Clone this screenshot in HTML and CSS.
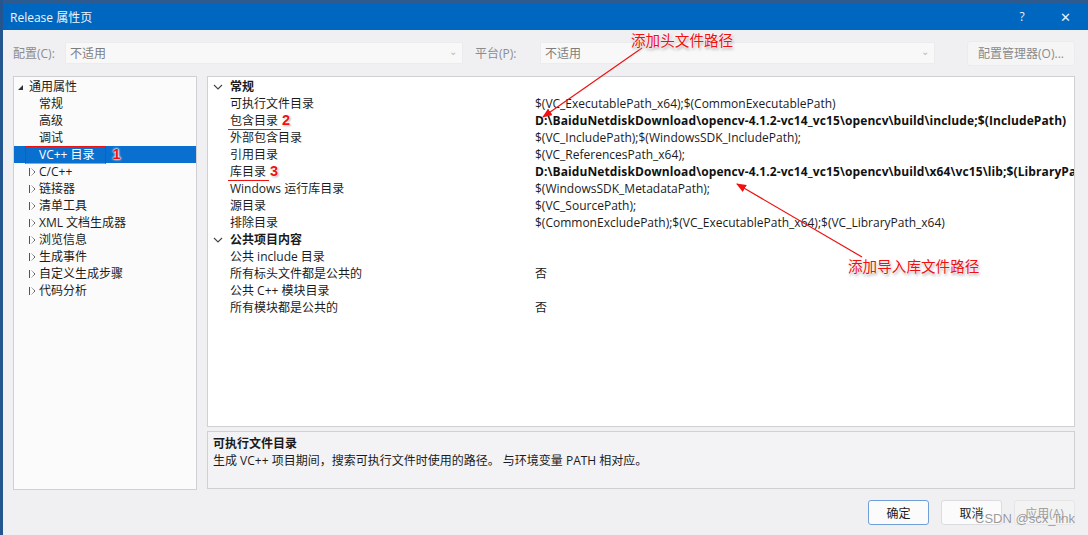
FILE: index.html
```html
<!DOCTYPE html>
<html lang="zh-CN">
<head>
  <meta charset="UTF-8" />
  <title>Release 属性页</title>
  <link rel="stylesheet" href="styles.css">
</head>
<body>
  <div class="window">
    <div class="titlebar">
      <span class="title">Release 属性页</span>
      <span class="title-btn">?</span>
      <span class="title-btn close">✕</span>
    </div>

    <div class="toolbar">
      <span class="tb-label">配置(C):</span>
      <div class="combo combo-config"><span>不适用</span><span class="chev">⌄</span></div>
      <span class="tb-label tb-label-platform">平台(P):</span>
      <div class="combo combo-platform"><span>不适用</span><span class="chev">⌄</span></div>
      <button class="btn btn-manager">配置管理器(O)...</button>
    </div>

    <div class="main">
      <div class="tree">
        <div class="node root"><span class="tri-open"></span>通用属性</div>
        <div class="node child">常规</div>
        <div class="node child">高级</div>
        <div class="node child">调试</div>
        <div class="node child selected"><span class="mark-box">VC++ 目录</span><span class="num num-1">1</span></div>
        <div class="node collapsed"><span class="tri-closed"></span>C/C++</div>
        <div class="node collapsed"><span class="tri-closed"></span>链接器</div>
        <div class="node collapsed"><span class="tri-closed"></span>清单工具</div>
        <div class="node collapsed"><span class="tri-closed"></span>XML 文档生成器</div>
        <div class="node collapsed"><span class="tri-closed"></span>浏览信息</div>
        <div class="node collapsed"><span class="tri-closed"></span>生成事件</div>
        <div class="node collapsed"><span class="tri-closed"></span>自定义生成步骤</div>
        <div class="node collapsed"><span class="tri-closed"></span>代码分析</div>
      </div>

      <div class="right">
        <div class="grid">
          <div class="row group">
            <span class="caret"><svg width="10" height="6" viewBox="0 0 10 6"><polyline points="1,1 5,5 9,1" fill="none" stroke="#444" stroke-width="1.1"/></svg></span>
            <span class="name">常规</span><span class="value"></span>
          </div>
          <div class="row"><span></span><span class="name">可执行文件目录</span><span class="value">$(VC_ExecutablePath_x64);$(CommonExecutablePath)</span></div>
          <div class="row"><span></span><span class="name"><span class="uline">包含目录</span><span class="num num-2">2</span></span><span class="value bold"><span class="uline uline-val">D:\BaiduNetdiskDownload\opencv-4.1.2-vc14_vc15\opencv\build\include;</span>$(IncludePath)</span></div>
          <div class="row"><span></span><span class="name">外部包含目录</span><span class="value">$(VC_IncludePath);$(WindowsSDK_IncludePath);</span></div>
          <div class="row"><span></span><span class="name">引用目录</span><span class="value">$(VC_ReferencesPath_x64);</span></div>
          <div class="row"><span></span><span class="name"><span class="uline">库目录</span><span class="num num-3">3</span></span><span class="value bold"><span class="uline uline-val">D:\BaiduNetdiskDownload\opencv-4.1.2-vc14_vc15\opencv\build\x64\vc15\lib;</span>$(LibraryPath)</span></div>
          <div class="row"><span></span><span class="name">Windows 运行库目录</span><span class="value">$(WindowsSDK_MetadataPath);</span></div>
          <div class="row"><span></span><span class="name">源目录</span><span class="value">$(VC_SourcePath);</span></div>
          <div class="row"><span></span><span class="name">排除目录</span><span class="value">$(CommonExcludePath);$(VC_ExecutablePath_x64);$(VC_LibraryPath_x64)</span></div>
          <div class="row group">
            <span class="caret"><svg width="10" height="6" viewBox="0 0 10 6"><polyline points="1,1 5,5 9,1" fill="none" stroke="#444" stroke-width="1.1"/></svg></span>
            <span class="name">公共项目内容</span><span class="value"></span>
          </div>
          <div class="row"><span></span><span class="name">公共 include 目录</span><span class="value"></span></div>
          <div class="row"><span></span><span class="name">所有标头文件都是公共的</span><span class="value">否</span></div>
          <div class="row"><span></span><span class="name">公共 C++ 模块目录</span><span class="value"></span></div>
          <div class="row"><span></span><span class="name">所有模块都是公共的</span><span class="value">否</span></div>
        </div>

        <div class="desc">
          <div class="desc-title">可执行文件目录</div>
          <div class="desc-text">生成 VC++ 项目期间，搜索可执行文件时使用的路径。 与环境变量 PATH 相对应。</div>
        </div>
      </div>
    </div>

    <div class="footer">
      <button class="btn btn-default">确定</button>
      <button class="btn">取消</button>
      <button class="btn btn-disabled">应用(A)</button>
    </div>

    <!-- annotations drawn on top of the screenshot -->
    <svg class="arrows" width="1088" height="535" viewBox="0 0 1088 535">
      <defs>
        <marker id="head" markerWidth="10" markerHeight="8" refX="9" refY="4" orient="auto" markerUnits="userSpaceOnUse">
          <path d="M0,0 L10,4 L0,8 Z" fill="#f01010"/>
        </marker>
      </defs>
      <line x1="642" y1="48" x2="543" y2="117" stroke="#f01010" stroke-width="1.2" marker-end="url(#head)"/>
      <line x1="862" y1="257" x2="737" y2="184" stroke="#f01010" stroke-width="1.2" marker-end="url(#head)"/>
    </svg>
    <div class="note note-include">添加头文件路径</div>
    <div class="note note-lib">添加导入库文件路径</div>
    <div class="watermark">CSDN @scx_link</div>
  </div>
</body>
</html>
```

FILE: styles.css
```css
:root {
  --bg: #f0f0f3;
  --panel: #fbfbfc;
  --border: #cfcfd4;
  --text: #1b1b1b;
  --muted: #8c8c8c;
  --accent: #0067c0;
  --select: #0a70cf;
  --red: #f01010;
}

* {
  box-sizing: border-box;
}

body {
  margin: 0;
  width: 1088px;
  height: 535px;
  overflow: hidden;
  font-family: 'Segoe UI', 'Open Sans', 'Noto Sans CJK SC', sans-serif;
  font-size: 12px;
  color: var(--text);
  background: #2b4f7a;
}

.window {
  position: relative;
  width: 1088px;
  height: 535px;
  background: var(--bg);
  border-left: 3px solid #25558e;
}

.titlebar {
  height: 30px;
  background: var(--accent);
  border-top: 3px solid #2d5b8f;
  color: #fff;
  display: flex;
  align-items: center;
  padding-left: 7px;
}

.title {
  flex: 1;
  font-size: 12px;
  color: #eef4fb;
}

.title-btn {
  width: 40px;
  text-align: center;
  font-size: 12px;
  color: #e8f0fa;
}

.title-btn.close {
  width: 46px;
  font-size: 13px;
}

.toolbar {
  height: 46px;
  display: flex;
  align-items: center;
  padding: 0 13px 0 10px;
}

.tb-label {
  width: 52px;
  color: var(--muted);
}

.tb-label-platform {
  width: 65px;
  margin-left: 12px;
}

.combo {
  height: 22px;
  background: #f8f8f9;
  border: 1px solid #ececef;
  display: flex;
  align-items: center;
  justify-content: space-between;
  padding: 0 5px 0 4px;
  color: #7d7d7d;
}

.combo-config {
  width: 398px;
}

.combo-platform {
  width: 395px;
}

.chev {
  color: #b8b8b8;
  font-size: 10px;
  line-height: 1;
  margin-top: -4px;
}

.btn {
  font-family: inherit;
  font-size: 12px;
  height: 25px;
  width: 61px;
  background: #fbfbfb;
  border: 1px solid #dcdce0;
  border-radius: 3px;
  color: var(--text);
  padding: 0;
}

.btn-manager {
  width: 108px;
  margin-left: auto;
  background: #f5f5f6;
  border-color: #ececee;
  color: #8a8a8a;
}

.btn-default {
  border: 1px solid #6f9fd6;
}

.btn-disabled {
  color: #a0a0a0;
  background: #f3f3f4;
  border-color: #e6e6e8;
}

.main {
  display: flex;
  gap: 10px;
  padding: 0 13px 0 10px;
  height: 414px;
}

.tree {
  width: 184px;
  background: var(--panel);
  border: 1px solid var(--border);
  padding-top: 1px;
}

.node {
  position: relative;
  height: 17px;
  line-height: 17px;
  white-space: nowrap;
  display: flex;
  align-items: center;
}

.node.root {
  padding-left: 4px;
}

.node.child {
  padding-left: 25px;
}

.node.collapsed {
  padding-left: 15px;
}

.tri-open {
  width: 0;
  height: 0;
  border-left: 5px solid transparent;
  border-bottom: 5px solid #333;
  margin-right: 6px;
  margin-top: 2px;
}

.tri-closed {
  width: 6px;
  height: 8px;
  margin-right: 4px;
  background: linear-gradient(to top right, transparent 49%, #555 50%, transparent 62%) top / 100% 50% no-repeat,
              linear-gradient(to bottom right, transparent 49%, #555 50%, transparent 62%) bottom / 100% 50% no-repeat;
  border-left: 1px solid #555;
}

.node.selected {
  background: var(--select);
  color: #fff;
}

.mark-box {
  margin-left: -14px;
  padding: 0 10px 0 13px;
  height: 18px;
  line-height: 16px;
  border: 1px solid var(--red);
  border-bottom-color: #9aa7b8;
}

.num {
  font-family: 'Liberation Sans', Arial, sans-serif;
  font-weight: bold;
  font-size: 14.5px;
  color: var(--red);
  text-shadow: 0 0 2px #fff, 0 0 2px #fff, 0 0 3px #fff, 1px 1px 2px #888;
}

.num-1 {
  margin-left: 7px;
}

.right {
  flex: 1;
  display: flex;
  flex-direction: column;
  gap: 4px;
}

.grid {
  height: 351px;
  background: #fff;
  border: 1px solid var(--border);
  padding-top: 1px;
  overflow: hidden;
}

.row {
  display: grid;
  grid-template-columns: 22px 305px 1fr;
  height: 17px;
  line-height: 17px;
  white-space: nowrap;
}

.row.group .name {
  font-weight: bold;
}

.caret {
  display: flex;
  align-items: center;
  padding-left: 5px;
}

.name {
  position: relative;
}

.value {
  overflow: hidden;
}

.value.bold {
  font-weight: bold;
  color: #111;
  letter-spacing: 0.1px;
}

.uline {
  position: relative;
}

.uline::after {
  content: "";
  position: absolute;
  left: -2px;
  right: -3px;
  bottom: -1px;
  height: 1px;
  background: var(--red);
}

.uline-val::after {
  left: -1px;
  right: -4px;
}

.num-2,
.num-3 {
  margin-left: 4px;
}

.desc {
  height: 58px;
  border: 1px solid var(--border);
  background: #f3f3f5;
  padding: 3px 5px;
  line-height: 17px;
}

.desc-title {
  font-weight: bold;
}

.footer {
  display: flex;
  justify-content: flex-end;
  gap: 12px;
  padding: 10px 13px 0 10px;
}

.arrows {
  position: absolute;
  left: -3px;
  top: 0;
  pointer-events: none;
}

.note {
  position: absolute;
  font-size: 14.6px;
  color: var(--red);
  white-space: nowrap;
  text-shadow: 0 0 2px #fff, 0 0 3px #fff, 1px 2px 3px #999;
}

.note-include {
  left: 628px;
  top: 29px;
}

.note-lib {
  left: 845px;
  top: 255px;
}

.watermark {
  position: absolute;
  left: 972px;
  top: 511px;
  font-family: 'Liberation Sans', Arial, sans-serif;
  font-size: 13px;
  color: rgba(110, 110, 110, 0.7);
  text-shadow: 0 0 1px rgba(255, 255, 255, 0.6);
}
```
